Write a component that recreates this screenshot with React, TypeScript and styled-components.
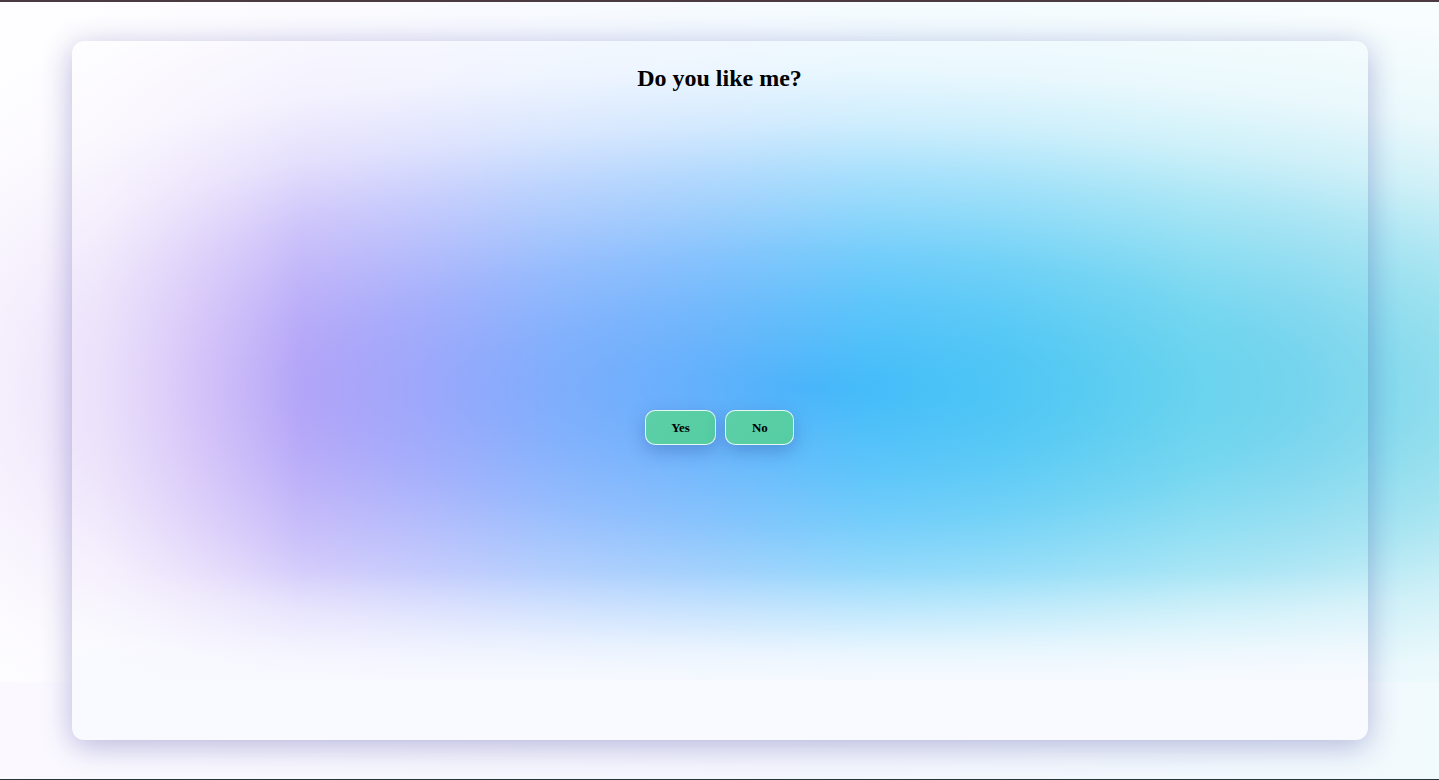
import React from "react";
import styled, { createGlobalStyle } from "styled-components";

const Global = createGlobalStyle`
  html, body { margin: 0; padding: 0; }
  body { font-family: "Liberation Serif", "Times New Roman", serif; }
  * { box-sizing: border-box; }
`;

/* the wash is drawn in a 1439 x 680 box; the card shows the same box shifted */
const mask = `radial-gradient(ellipse 1450px 400px at 810px 388px,
    rgba(255,255,255,0) 0%,
    rgba(255,255,255,0.16) 22%,
    rgba(255,255,255,0.28) 34%,
    rgba(255,255,255,0.55) 54%,
    rgba(255,255,255,0.74) 66%,
    rgba(255,255,255,0.89) 80%,
    rgba(255,255,255,0.96) 100%)`;

const hues = `linear-gradient(90deg,
    #e6d8fa 0px,
    #d9c5f7 100px,
    #b99df5 200px,
    #9480f5 300px,
    #8491fa 420px,
    #6da2fc 550px,
    #5aacfc 700px,
    #40bbf9 870px,
    #3cc0f4 1000px,
    #43c8ea 1200px,
    #41c4e7 1300px,
    #43c6e1 1439px)`;

const Page = styled.div`
  height: 100vh;
  border-top: 2px solid #4b3a40;
  border-bottom: 1px solid #263636;
  padding-top: 39px;
  background:
    ${mask} 0 0 / 1439px 680px no-repeat,
    ${hues} 0 0 / 1439px 680px no-repeat,
    linear-gradient(90deg, #fbf9ff 0%, #f5f6fe 50%, #f1fafd 100%);
`;

const Card = styled.main`
  width: 1296px;
  height: 699px;
  margin: 0 auto;
  border-radius: 12px;
  box-shadow: 0 6px 30px rgba(50, 50, 150, 0.33);
  display: flex;
  flex-direction: column;
  align-items: center;
  background:
    linear-gradient(180deg,
      rgba(248,250,255,0) 76%,
      rgba(248,250,255,0.35) 84%,
      rgba(248,250,255,0.75) 89%,
      rgba(248,250,255,0.95) 93%,
      rgba(248,250,255,1) 100%),
    ${mask} -72px -41px / 1439px 680px no-repeat,
    ${hues} -72px -41px / 1439px 680px no-repeat,
    #f8f9ff;
`;

const Title = styled.h2`
  margin: 23px 0 0;
  font-size: 24px;
  font-weight: bold;
  line-height: 28px;
  color: #000;
`;

const Actions = styled.div`
  display: flex;
  gap: 9px;
  margin-top: 318px;
`;

const Choice = styled.button`
  height: 35px;
  padding: 0 25.5px;
  border-radius: 10px;
  border: 1px solid rgba(255, 255, 255, 0.85);
  background: linear-gradient(135deg, #5dcfa8, #55cda2);
  color: #000;
  font-family: "Liberation Serif", "Times New Roman", serif;
  font-weight: bold;
  font-size: 13px;
  box-shadow: 0 6px 18px rgba(40, 70, 160, 0.35);
  cursor: pointer;
`;

export default function App() {
  return (
    <>
      <Global />
      <Page>
        <Card>
          <Title>Do you like me?</Title>
          <Actions>
            <Choice>Yes</Choice>
            <Choice>No</Choice>
          </Actions>
        </Card>
      </Page>
    </>
  );
}
